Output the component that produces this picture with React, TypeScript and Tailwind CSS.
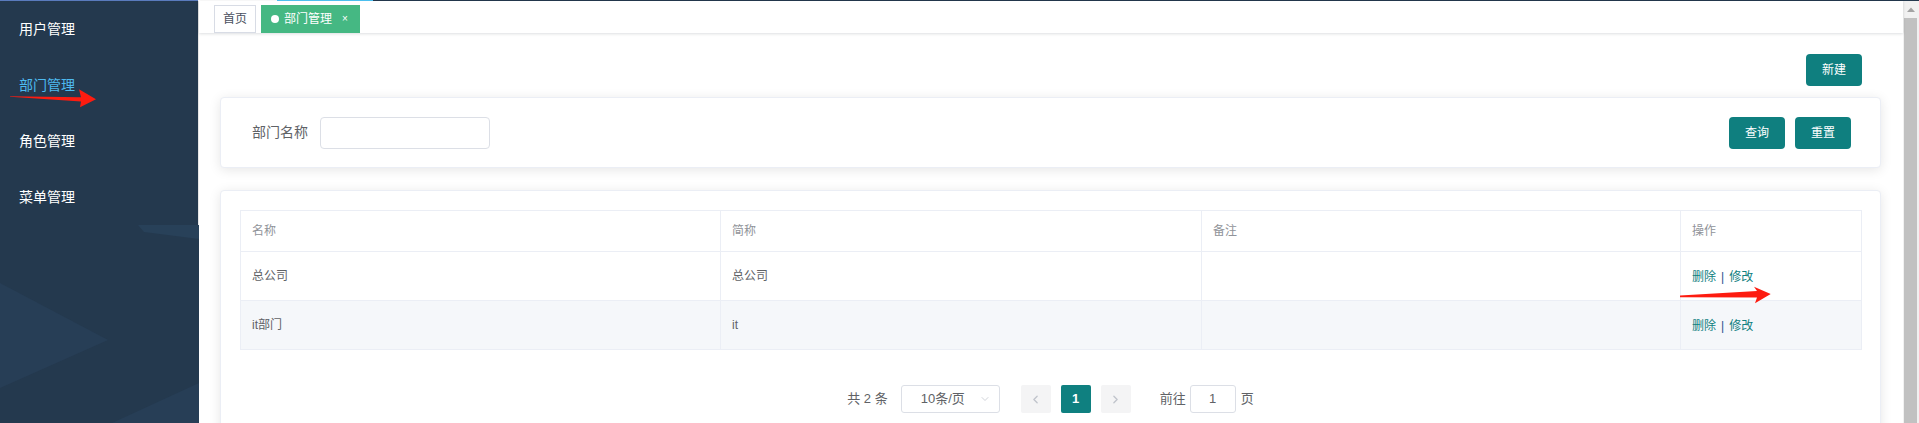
import { ChevronDown, ChevronLeft, ChevronRight } from 'lucide-react';

const menus = ['用户管理', '部门管理', '角色管理', '菜单管理'];

const rows = [
  { name: '总公司', short: '总公司', remark: '' },
  { name: 'it部门', short: 'it', remark: '' },
];

function TealButton({ label }: { label: string }) {
  return (
    <button className="w-[56px] h-[32px] rounded-[4px] bg-[#0f7f7f] text-white text-[12px] flex items-center justify-center">
      {label}
    </button>
  );
}

export default function App() {
  return (
    <div className="relative w-[1919px] h-[423px] overflow-hidden bg-white font-['Liberation_Sans','Noto_Sans_CJK_SC',sans-serif]">
      {/* top loading line */}
      <div className="flex h-px">
        <div className="w-[198px] bg-[#5a7bbd]" />
        <div className="w-[79px] bg-white" />
        <div className="w-[96px] bg-[#4fc6f6]" />
        <div className="flex-1 bg-[#24394e]" />
      </div>

      <div className="flex h-[422px]">
        {/* Sidebar */}
        <aside className="relative w-[199px] bg-[#24394e]">
          <svg className="absolute inset-0" width="199" height="422" viewBox="0 1 199 422">
            <polygon points="138,225 199,225 199,239 144,232" fill="#284159" />
            <polygon points="0,283 108,340 0,388" fill="#273e56" />
            <polygon points="199,383 112,423 199,423" fill="#273e56" />
          </svg>
          <nav className="relative w-[199px] border-r border-[#e6e6e6]">
            {menus.map((m, i) => (
              <div
                key={m}
                className={`h-[56px] pl-[19px] flex items-center text-[14px] ${i === 1 ? 'text-[#4dbaf0]' : 'text-white'}`}
              >
                {m}
              </div>
            ))}
          </nav>
        </aside>

        {/* Main */}
        <main className="flex-1 flex flex-col min-w-0">
          <div className="relative z-10 h-[34px] flex items-start gap-[5px] pl-[15px] pt-[4px] bg-white shadow-[0_1px_3px_rgba(0,21,41,0.12),0_0_3px_rgba(0,0,0,0.04)]">
            <div className="h-[28px] px-[8px] border border-[#d8dce5] text-[12px] text-[#495060] flex items-center">首页</div>
            <div className="h-[28px] w-[99px] pl-[10px] bg-[#45b883] text-[12px] text-white flex items-center">
              <span className="w-[8px] h-[8px] rounded-full bg-white mr-[5px]" />
              <span>部门管理</span>
              <span className="ml-[10px] text-[10px] leading-none">×</span>
            </div>
          </div>

          <div className="pl-[21px] pr-[22px]">
            <div className="flex justify-end pr-[19px] pt-[21px]">
              <TealButton label="新建" />
            </div>

            {/* search card */}
            <div className="mt-[11px] h-[71px] border border-[#ebeef5] rounded-[4px] bg-white shadow-[0_2px_12px_0_rgba(0,0,0,0.1)] flex items-center pl-[31px] pr-[29px]">
              <span className="text-[14px] text-[#606266] mr-[12px]">部门名称</span>
              <div className="w-[170px] h-[32px] border border-[#dcdfe6] rounded-[4px]" />
              <div className="ml-auto flex gap-[10px]">
                <TealButton label="查询" />
                <TealButton label="重置" />
              </div>
            </div>

            {/* table card */}
            <div className="mt-[22px] h-[260px] border border-[#ebeef5] rounded-[4px] bg-white shadow-[0_2px_12px_0_rgba(0,0,0,0.1)] px-[19px] pt-[19px]">
              <table className="w-[1621px] table-fixed border-collapse text-[12px]">
                <colgroup>
                  <col className="w-[480px]" />
                  <col className="w-[481px]" />
                  <col className="w-[479px]" />
                  <col className="w-[181px]" />
                </colgroup>
                <thead>
                  <tr className="h-[41px]">
                    {['名称', '简称', '备注', '操作'].map((h) => (
                      <th key={h} className="border border-[#ebeef5] px-[11px] text-left font-normal text-[#909399]">
                        {h}
                      </th>
                    ))}
                  </tr>
                </thead>
                <tbody>
                  {rows.map((r, i) => (
                    <tr key={r.name} className={`h-[49px] ${i % 2 === 1 ? 'bg-[#f5f7fa]' : 'bg-white'}`}>
                      <td className="border border-[#ebeef5] px-[11px] text-[#606266]">{r.name}</td>
                      <td className="border border-[#ebeef5] px-[11px] text-[#606266]">{r.short}</td>
                      <td className="border border-[#ebeef5] px-[11px] text-[#606266]">{r.remark}</td>
                      <td className="border border-[#ebeef5] px-[11px] pt-[2px]">
                        <span className="text-[#0f8080]">删除</span>
                        <span className="text-[#1d4f8f] mx-[5px]">|</span>
                        <span className="text-[#0f8080]">修改</span>
                      </td>
                    </tr>
                  ))}
                </tbody>
              </table>

              {/* pagination */}
              <div className="mt-[35px] flex items-center justify-center text-[13px] text-[#606266]">
                <span className="mr-[13px]">共 2 条</span>
                <div className="w-[99px] h-[28px] border border-[#dcdfe6] rounded-[3px] flex items-center pl-[19px] pr-[8px]">
                  <span className="flex-1">10条/页</span>
                  <ChevronDown className="w-[12px] h-[12px] text-[#c0c4cc]" strokeWidth={1.5} />
                </div>
                <div className="ml-[21px] w-[30px] h-[28px] rounded-[2px] bg-[#f4f4f5] flex items-center justify-center">
                  <ChevronLeft className="w-[13px] h-[13px] text-[#c0c4cc]" strokeWidth={2.5} />
                </div>
                <div className="ml-[10px] w-[30px] h-[28px] rounded-[2px] bg-[#0f8080] text-white font-bold flex items-center justify-center">1</div>
                <div className="ml-[10px] w-[30px] h-[28px] rounded-[2px] bg-[#f4f4f5] flex items-center justify-center">
                  <ChevronRight className="w-[13px] h-[13px] text-[#c0c4cc]" strokeWidth={2.5} />
                </div>
                <span className="ml-[29px] mr-[4px]">前往</span>
                <div className="w-[46px] h-[28px] border border-[#dcdfe6] rounded-[3px] flex items-center justify-center">1</div>
                <span className="ml-[5px]">页</span>
              </div>
            </div>
          </div>
        </main>

        {/* scrollbar */}
        <div className="w-[16px] bg-[#f1f1f1] flex flex-col items-center">
          <div className="h-[17px] flex items-center justify-center">
            <svg width="8" height="5" viewBox="0 0 8 5">
              <polygon points="0,5 4,0.5 8,5" fill="#a3a3a3" />
            </svg>
          </div>
          <div className="flex-1 w-[13px] ml-[-1px] bg-[#c1c1c1]" />
        </div>
      </div>

      {/* red annotation arrows */}
      <svg className="absolute inset-0 pointer-events-none" width="1919" height="423" viewBox="0 0 1919 423">
        <polygon points="10,96.3 81,97.2 79,89.3 96,99.3 80,107.3 81,101.5 10,96.8" fill="#fd1c10" />
        <polygon points="1680,295.5 1757,291 1754,286.7 1770.7,294 1755,303.3 1757,297.5 1680,297.3" fill="#fd1c10" />
      </svg>
    </div>
  );
}
